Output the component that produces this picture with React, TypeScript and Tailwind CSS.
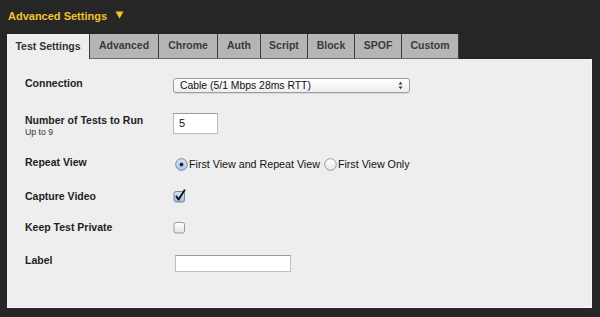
import React from "react";

const tabs = ["Test Settings", "Advanced", "Chrome", "Auth", "Script", "Block", "SPOF", "Custom"];
const tabWidths = [83, 69, 59, 43, 47, 47, 47, 57];

function Radio({ checked }: { checked: boolean }) {
  return (
    <svg width="13" height="13" viewBox="0 0 13 13" className="shrink-0">
      <defs>
        <linearGradient id={checked ? "rg1" : "rg0"} x1="0" y1="0" x2="0" y2="1">
          <stop offset="0" stopColor={checked ? "#d6e6f7" : "#ffffff"} />
          <stop offset="1" stopColor={checked ? "#a9c8ea" : "#e6e6e6"} />
        </linearGradient>
      </defs>
      <circle cx="6.5" cy="6.5" r="5.8" fill={`url(#${checked ? "rg1" : "rg0"})`} stroke={checked ? "#6f7f92" : "#8e8e8e"} strokeWidth="0.9" />
      {checked && <circle cx="6.5" cy="6.5" r="1.9" fill="#1f2a38" />}
    </svg>
  );
}

function Checkbox({ checked }: { checked: boolean }) {
  return (
    <svg width="14" height="14" viewBox="0 0 14 14" className="shrink-0">
      <defs>
        <linearGradient id={checked ? "cg1" : "cg0"} x1="0" y1="0" x2="0" y2="1">
          <stop offset="0" stopColor={checked ? "#d3e3f6" : "#ffffff"} />
          <stop offset="1" stopColor={checked ? "#9fc0e6" : "#e4e4e4"} />
        </linearGradient>
      </defs>
      <rect x="1" y="2.5" width="10.5" height="10.5" rx="2" fill={`url(#${checked ? "cg1" : "cg0"})`} stroke={checked ? "#6d7c8f" : "#8e8e8e"} strokeWidth="0.9" />
      {checked && <path d="M3.5 7.5 L5.6 10.6 L11.5 1.2" fill="none" stroke="#111" strokeWidth="1.9" strokeLinecap="round" strokeLinejoin="round" />}
    </svg>
  );
}

export default function App() {
  const label = "text-[10.5px] leading-[12px] font-bold text-[#222]";
  return (
    <div className="w-[600px] h-[317px] bg-[#262626] overflow-hidden font-['Arial','Liberation_Sans',sans-serif]">
      <div className="flex items-center h-[19px] pt-[6px] pl-[8px] box-content">
        <span className="text-[11px] font-bold text-[#f5c22a] leading-[12px]">Advanced Settings</span>
        <svg width="9" height="8" viewBox="0 0 9 8" className="ml-[8px] -mt-[1px]">
          <path d="M0.5 0.5 H8.5 L4.5 7.5 Z" fill="#f5c22a" />
        </svg>
      </div>
      <div className="flex ml-[7px] mt-[9px] h-[25px]">
        {tabs.map((t, i) => (
          <div
            key={t}
            style={{ width: tabWidths[i] }}
            className={
              i === 0
                ? "h-[25px] bg-[#eeeeee] flex items-center justify-center text-[10.5px] font-bold text-[#333] border-r border-[#3c3c3c]"
                : "h-[25px] bg-[#b5b5b5] flex items-center justify-center text-[10.5px] font-bold text-[#3a3a3a] border-r border-b border-[#3c3c3c] border-b-[#6a6a6a]"
            }
          >
            {t}
          </div>
        ))}
      </div>
      <div className="ml-[7px] w-[585px] h-[249px] bg-[#eeeeee] border-r border-b border-[#f8f8f8] flex flex-col pl-[18px] pt-[18px]">
        <div className="flex h-[36px]">
          <div className={`${label} w-[148px]`}>Connection</div>
          <div className="mt-[1px] w-[237px] h-[15px] rounded-[3px] border border-[#9c9c9c] bg-gradient-to-b from-[#ffffff] to-[#eeeeee] flex items-center justify-between pl-[6px] pr-[6px] shadow-[0_1px_0_#dadada]">
            <span className="text-[10.4px] leading-[12px] text-[#111]">Cable (5/1 Mbps 28ms RTT)</span>
            <svg width="5" height="9" viewBox="0 0 5 9">
              <path d="M0.5 3.5 L2.5 0.8 L4.5 3.5 Z M0.5 5.5 L2.5 8.2 L4.5 5.5 Z" fill="#333" />
            </svg>
          </div>
        </div>
        <div className="flex h-[43px]">
          <div className="w-[148px] pt-[1px]">
            <div className={label}>Number of Tests to Run</div>
            <div className="text-[8.7px] leading-[10px] text-[#333] mt-[1px]">Up to 9</div>
          </div>
          <div className="w-[45px] h-[21px] bg-white border border-[#b9b9b9] border-t-[#9a9a9a] flex items-center pl-[5px] text-[11px] text-[#111]">
            5
          </div>
        </div>
        <div className="flex h-[34px]">
          <div className={`${label} w-[150px]`}>Repeat View</div>
          <div className="mt-[1px] flex items-center h-[14px] text-[10.7px] text-[#111]">
            <Radio checked />
            <span className="ml-[1px]">First View and Repeat View</span>
            <span className="ml-[4px]"><Radio checked={false} /></span>
            <span className="ml-[1px]">First View Only</span>
          </div>
        </div>
        <div className="flex h-[31px]">
          <div className={`${label} w-[148px]`}>Capture Video</div>
          <div className="-mt-[1px]"><Checkbox checked /></div>
        </div>
        <div className="flex h-[33px]">
          <div className={`${label} w-[148px]`}>Keep Test Private</div>
          <div className="-mt-[1px]"><Checkbox checked={false} /></div>
        </div>
        <div className="flex">
          <div className={`${label} w-[150px]`}>Label</div>
          <div className="mt-[1px] w-[116px] h-[17px] bg-white border border-[#bdbdbd] border-t-[#9a9a9a]" />
        </div>
      </div>
    </div>
  );
}
